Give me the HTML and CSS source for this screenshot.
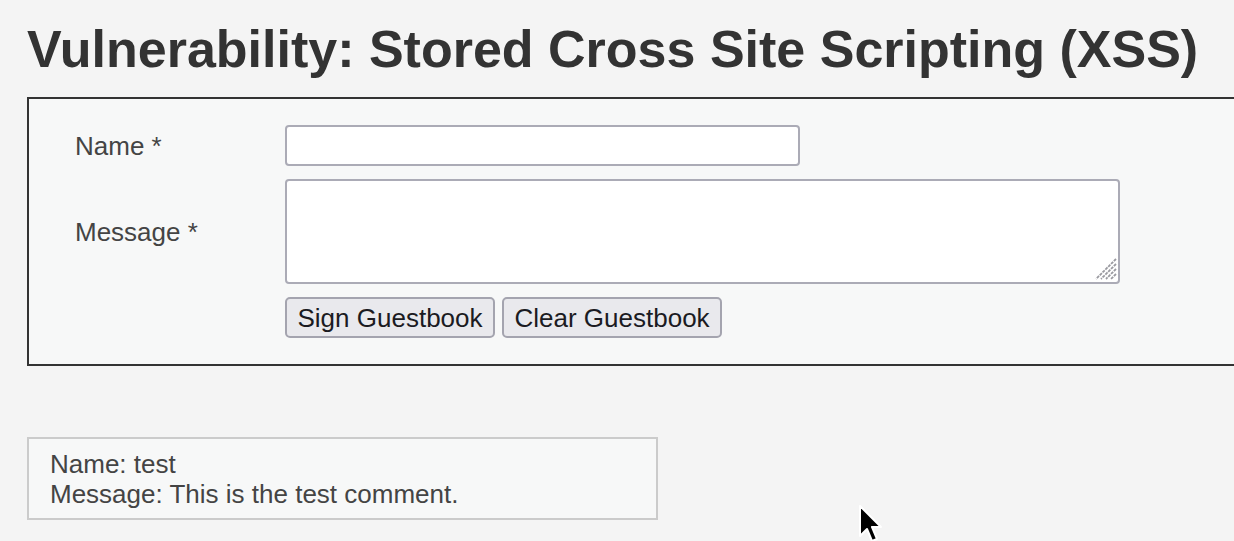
FILE: index.html
```html
<!DOCTYPE html>
<html lang="en">
<head>
<meta charset="utf-8">
<title>Vulnerability: Stored Cross Site Scripting (XSS)</title>
<link rel="stylesheet" href="styles.css">
</head>
<body>
<div class="page">
  <h1 class="title">Vulnerability: Stored Cross Site Scripting (XSS)</h1>
  <div class="vuln-area">
    <form class="gb-form">
      <label class="lbl" for="txtName">Name *</label>
      <input id="txtName" class="txt" type="text">
      <label class="lbl" for="mtxMessage">Message *</label>
      <div class="ta-wrap">
        <textarea id="mtxMessage" class="ta"></textarea>
        <svg class="grip" width="22" height="22" viewBox="0 0 22 22">
          <g stroke="#9a9aa0" stroke-width="1.8" stroke-dasharray="3 1" stroke-linecap="butt">
            <line x1="21" y1="1" x2="1" y2="21"/>
            <line x1="21" y1="6" x2="6" y2="21"/>
            <line x1="21" y1="11" x2="11" y2="21"/>
            <line x1="21" y1="16" x2="16" y2="21"/>
          </g>
        </svg>
      </div>
      <div class="btns">
        <button type="button" class="btn">Sign Guestbook</button>
        <button type="button" class="btn">Clear Guestbook</button>
      </div>
    </form>
  </div>
  <div class="comments">Name: test<br>Message: This is the test comment.</div>
</div>
<svg class="cursor" width="28" height="40" viewBox="0 0 28 40">
  <path d="M2 1 L2 31 L9 24 L14 36 L19 34 L14 22 L23 22 Z" fill="#000" stroke="#fff" stroke-width="2" stroke-linejoin="round"/>
</svg>
</body>
</html>
```

FILE: styles.css
```css
html, body {
  margin: 0;
  padding: 0;
  background: #f4f4f4;
  overflow: hidden;
}

.page {
  padding: 0 0 0 27px;
  font-family: "Liberation Sans", Arial, sans-serif;
  font-size: 26px;
  color: #444;
}

.title {
  margin: 19px 0 0;
  font-size: 52px;
  line-height: 60px;
  font-weight: bold;
  color: #333;
  white-space: nowrap;
}

.vuln-area {
  margin-top: 18px;
  width: 1260px;
  border: 2px solid #333;
  background: #f7f8f8;
  padding: 26px 0 26px 46px;
  box-sizing: border-box;
}

.gb-form {
  display: grid;
  grid-template-columns: 210px auto;
  row-gap: 13px;
  align-items: center;
  justify-items: start;
}

.lbl {
  color: #444;
  line-height: 30px;
}

.txt {
  width: 515px;
  height: 41px;
  box-sizing: border-box;
  border: 2px solid #ababb6;
  border-radius: 4px;
  background: #fff;
  margin: 0;
  padding: 0 6px;
  font: inherit;
}

.ta-wrap {
  position: relative;
  width: 835px;
  height: 105px;
}

.ta {
  display: block;
  width: 835px;
  height: 105px;
  box-sizing: border-box;
  border: 2px solid #ababb6;
  border-radius: 4px;
  background: #fff;
  margin: 0;
  resize: none;
  font: inherit;
}

.grip {
  position: absolute;
  right: 3px;
  bottom: 4px;
}

.btns {
  grid-column: 2;
  display: flex;
  gap: 7px;
}

.btn {
  height: 41px;
  box-sizing: border-box;
  margin: 0;
  padding: 0 10.5px;
  border: 2px solid #a4a4af;
  border-radius: 5px;
  background: #e9e9ed;
  color: #1b1b22;
  font-family: "Liberation Sans", Arial, sans-serif;
  font-size: 26px;
  line-height: 30px;
}

.comments {
  margin-top: 71px;
  width: 631px;
  height: 83px;
  box-sizing: border-box;
  border: 2px solid #cbcbcb;
  background: #f7f8f8;
  padding: 10px 21px;
  line-height: 30px;
  color: #444;
}

.cursor {
  position: absolute;
  left: 858px;
  top: 505px;
}
```
